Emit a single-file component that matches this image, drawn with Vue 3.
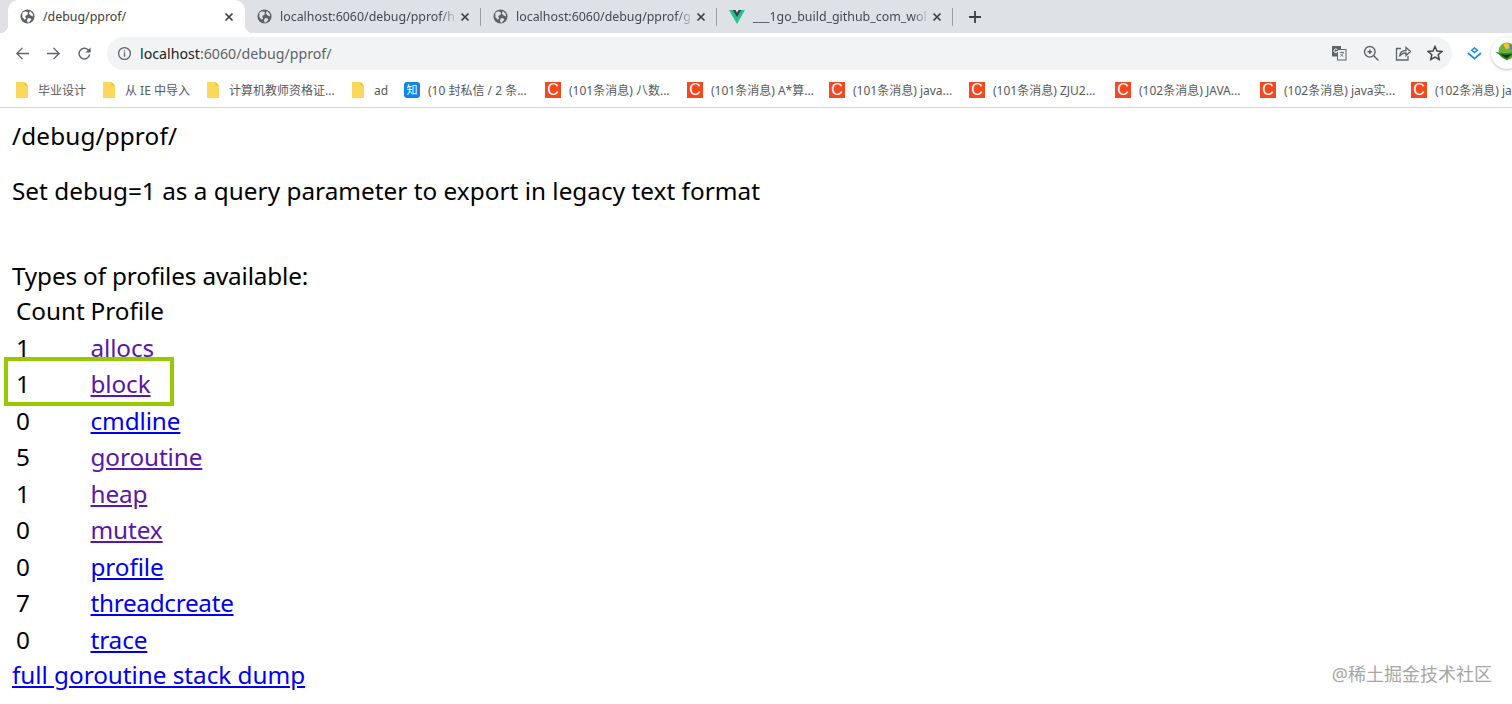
<script setup>
const tabs = [
  { title: 'localhost:6060/debug/pprof/h', icon: 'globe' },
  { title: 'localhost:6060/debug/pprof/g', icon: 'globe' },
  { title: '___1go_build_github_com_wol', icon: 'vue' },
]
const bookmarks = [
  { icon: 'folder', text: '毕业设计', w: 87 },
  { icon: 'folder', text: '从 IE 中导入', w: 104 },
  { icon: 'folder', text: '计算机教师资格证...', w: 145 },
  { icon: 'folder', text: 'ad', w: 52 },
  { icon: 'zhi', text: '(10 封私信 / 2 条...', w: 141 },
  { icon: 'c', text: '(101条消息) 八数...', w: 142 },
  { icon: 'c', text: '(101条消息) A*算...', w: 142 },
  { icon: 'c', text: '(101条消息) java...', w: 140 },
  { icon: 'c', text: '(101条消息) ZJU2...', w: 146 },
  { icon: 'c', text: '(102条消息) JAVA...', w: 145 },
  { icon: 'c', text: '(102条消息) java实...', w: 151 },
  { icon: 'c', text: '(102条消息) ja', w: 100 },
]
const rows = [
  { n: 1, name: 'allocs', seen: true },
  { n: 1, name: 'block', seen: true },
  { n: 0, name: 'cmdline', seen: false },
  { n: 5, name: 'goroutine', seen: true },
  { n: 1, name: 'heap', seen: true },
  { n: 0, name: 'mutex', seen: true },
  { n: 0, name: 'profile', seen: false },
  { n: 7, name: 'threadcreate', seen: false, tight: true },
  { n: 0, name: 'trace', seen: false },
]
</script>

<template>
  <div class="page">
    <header class="chrome">
      <div class="tabstrip">
        <div class="tab active">
          <svg class="favicon" viewBox="0 0 16 16"><circle cx="8" cy="8" r="7.500" fill="#5f6368"/><path d="M2.500 4l3-1.500 3 1-.5 2.500-2.500 1.500L6.500 10 5 11.500 2.500 8.500zM10.500 2l3 3 .5 3-2.500-1-2-2zM8.500 9.500l3 .5.5 1.500-2.500 3H8l-.5-2.500z" fill="#fff"/></svg>
          <span class="tabtitle">/debug/pprof/</span>
          <svg class="close" viewBox="0 0 10 10"><path d="M1.500 1.500l7 7M8.500 1.500l-7 7" stroke="#3c4043" stroke-width="1.700"/></svg>
        </div>
        <div v-for="t in tabs" :key="t.title" class="tab">
          <svg v-if="t.icon === 'globe'" class="favicon" viewBox="0 0 16 16"><circle cx="8" cy="8" r="7.500" fill="#5f6368"/><path d="M2.500 4l3-1.500 3 1-.5 2.500-2.500 1.500L6.500 10 5 11.500 2.500 8.500zM10.500 2l3 3 .5 3-2.500-1-2-2zM8.500 9.500l3 .5.5 1.500-2.500 3H8l-.5-2.500z" fill="#dee1e6"/></svg>
          <svg v-else class="favicon vue" viewBox="0 0 16 14"><path d="M0 0h3.500L8 7.500 12.500 0H16L8 14z" fill="#25c28a"/><path d="M3.500 0h3L8 2.700 9.500 0h3L8 7.500z" fill="#2f4858"/></svg>
          <span class="tabtitle">{{ t.title }}</span>
          <svg class="close" viewBox="0 0 10 10"><path d="M1.500 1.500l7 7M8.500 1.500l-7 7" stroke="#3c4043" stroke-width="1.700"/></svg>
        </div>
        <svg class="plus" viewBox="0 0 12 12"><path d="M6 0v12M0 6h12" stroke="#3c4043" stroke-width="1.800"/></svg>
      </div>
      <div class="toolbar">
        <svg class="navicon" viewBox="0 0 16 16"><path d="M15 8H2M8 2L2 8l6 6" fill="none" stroke="#5f6368" stroke-width="1.500"/></svg>
        <svg class="navicon" viewBox="0 0 16 16"><path d="M1 8h13M8 2l6 6-6 6" fill="none" stroke="#5f6368" stroke-width="1.500"/></svg>
        <svg class="navicon reload" viewBox="0 0 16 16"><path d="M13.500 9a5.700 5.700 0 1 1-1.700-5L14 6" fill="none" stroke="#5f6368" stroke-width="1.500"/><path d="M14.500 1.500v5.500H9z" fill="#5f6368"/></svg>
        <div class="omnibox">
          <svg class="info" viewBox="0 0 16 16"><circle cx="8" cy="8" r="6.300" fill="none" stroke="#5f6368" stroke-width="1.400"/><path d="M8 7v4.500M8 4.500v1.400" stroke="#5f6368" stroke-width="1.400"/></svg>
          <span class="url"><span class="host">localhost</span>:6060/debug/pprof/</span>
          <span class="spacer"></span>
          <svg class="omniicon" viewBox="0 0 16 16"><rect x="1" y="1" width="9" height="10.500" fill="#5f6368"/><rect x="6.500" y="4.500" width="8.500" height="10.500" fill="#f1f3f4" stroke="#5f6368"/><path d="M8.500 7.500h4.500M10.700 6.500v1M12.300 7.500c-.5 2-1.500 3-3 4M9.500 9c.7 1 1.500 1.800 2.800 2.500" fill="none" stroke="#5f6368" stroke-width=".8"/><path d="M6.200 4.500a1.900 1.900 0 1 0 .3 2.200H4.700" fill="none" stroke="#fff"/></svg>
          <svg class="omniicon" viewBox="0 0 16 16"><circle cx="6.800" cy="6.800" r="5.300" fill="none" stroke="#5f6368" stroke-width="1.400"/><path d="M10.700 10.700L15.500 15.500M4.500 6.800h4.600M6.800 4.500v4.600" stroke="#5f6368" stroke-width="1.400"/></svg>
          <svg class="omniicon" viewBox="0 0 16 16"><path d="M6 3.500H1.500V15H13v-4" fill="none" stroke="#5f6368" stroke-width="1.300"/><path d="M4.500 11.500c.3-4 3-6 6.500-6V2.500L15.500 6.500 11 10.500V8c-3 0-5 1-6.500 3.500z" fill="none" stroke="#5f6368" stroke-width="1.300"/></svg>
          <svg class="omniicon" viewBox="0 0 16 16"><path d="M8 1.500l2 4.500 4.800.5-3.600 3.200 1 4.800L8 12.100l-4.200 2.400 1-4.800L1.200 6.500 6 6z" fill="none" stroke="#444" stroke-width="1.500"/></svg>
        </div>
        <svg class="idm" viewBox="0 0 16 14"><path d="M5 3.500L8 1l3 2.500L8 6z" fill="none" stroke="#1a8cf0" stroke-width="1.700"/><path d="M1 6.500l7 6 7-6" fill="none" stroke="#1a8cf0" stroke-width="2"/></svg>
        <div class="avatar">
          <svg viewBox="0 0 24 24" width="24" height="24"><circle cx="13" cy="10" r="8.500" fill="#6fb13f"/><path d="M9 2.500c4-1 7 0 9 3l-6 3z" fill="#f2c230"/><path d="M15 3c3 1 5 3 6 6l-5-1z" fill="#3b82d6"/><path d="M1 10.500c6 2 14 2 21 0l-9 9z" fill="#2e8b2e"/><path d="M6 13c4 1 8 1 12 0l-5.500 4.500z" fill="#143d14"/></svg>
        </div>
      </div>
      <div class="bookmarks">
        <div v-for="b in bookmarks" :key="b.text" class="bookmark" :style="{ width: b.w + 'px' }">
          <svg v-if="b.icon === 'folder'" class="bicon folder" viewBox="0 0 12 16"><path d="M0 0h8.500L12 3.500V16H0z" fill="#fbd75b"/><path d="M8.500 0L12 3.500H8.500z" fill="#f2c230"/></svg>
          <span v-else-if="b.icon === 'zhi'" class="bicon zhi">知</span>
          <span v-else class="bicon csdn">C</span>
          <span class="btext">{{ b.text }}</span>
        </div>
      </div>
    </header>

    <main class="content">
      <div class="title">/debug/pprof/</div>
      <p class="note">Set debug=1 as a query parameter to export in legacy text format</p>
      <div class="types">Types of profiles available:</div>
      <div class="profiles">
        <div>Count</div>
        <div>Profile</div>
        <template v-for="r in rows" :key="r.name">
          <div>{{ r.n }}</div>
          <div><a href="#" :class="{ visited: r.seen, tight: r.tight }">{{ r.name }}</a></div>
        </template>
      </div>
      <a href="#" class="dump">full goroutine stack dump</a>
    </main>

    <div class="highlight"></div>
    <div class="watermark">@稀土掘金技术社区</div>
  </div>
</template>

<style scoped>
.page {
  position: relative;
  width: 1512px;
  height: 704px;
  overflow: hidden;
  background: #fff;
  font-family: "Noto Sans", "Noto Sans CJK SC", sans-serif;
  color: #000;
}
.chrome {
  height: 108px;
  border-bottom: 1px solid #d6d7d9;
  box-sizing: border-box;
}
.tabstrip {
  height: 33px;
  background: #dee1e6;
  display: flex;
  align-items: center;
  padding-left: 8px;
}
.tab {
  width: 236px;
  height: 33px;
  box-sizing: border-box;
  display: flex;
  align-items: center;
  padding: 0 11px 0 12px;
  position: relative;
  color: #45494f;
  font-size: 12.400px;
}
.tab::after {
  content: "";
  position: absolute;
  right: 0;
  top: 8px;
  height: 18px;
  width: 1px;
  background: #9da0a5;
}
.tab.active {
  width: 237px;
  background: #fff;
  border-radius: 10px 10px 0 0;
  color: #3c4043;
}
.tab.active::before,
.tab.active::after {
  content: "";
  position: absolute;
  top: auto;
  bottom: 0;
  width: 8px;
  height: 8px;
  background: #fff;
}
.tab.active::before {
  left: -8px;
  -webkit-mask-image: radial-gradient(circle at 0 0, transparent 8px, #000 8.500px);
  mask-image: radial-gradient(circle at 0 0, transparent 8px, #000 8.500px);
}
.tab.active::after {
  right: -8px;
  -webkit-mask-image: radial-gradient(circle at 100% 0, transparent 8px, #000 8.500px);
  mask-image: radial-gradient(circle at 100% 0, transparent 8px, #000 8.500px);
}
.favicon {
  width: 15px;
  height: 15px;
  flex: none;
}
.favicon.vue {
  width: 16px;
  height: 14px;
}
.tabtitle {
  flex: 1;
  min-width: 0;
  margin-left: 8px;
  white-space: nowrap;
  overflow: hidden;
  -webkit-mask-image: linear-gradient(to right, #000 90%, transparent 100%);
  mask-image: linear-gradient(to right, #000 90%, transparent 100%);
}
.tab.active .tabtitle {
  -webkit-mask-image: none;
  mask-image: none;
}
.close {
  flex: none;
  width: 10px;
  height: 10px;
  margin-left: 2px;
}
.plus {
  margin-left: 16px;
  width: 12px;
  height: 12px;
  flex: none;
}
.toolbar {
  height: 40px;
  display: flex;
  align-items: center;
  padding-left: 15px;
}
.navicon {
  width: 15px;
  height: 15px;
  margin-right: 16px;
  flex: none;
}
.navicon.reload {
  margin-right: 0;
}
.omnibox {
  margin-left: 15px;
  width: 1345px;
  height: 33px;
  border-radius: 17px;
  background: #f1f3f4;
  display: flex;
  align-items: center;
  padding: 0 9px 0 10px;
  box-sizing: border-box;
  flex: none;
}
.info {
  width: 15px;
  height: 15px;
  flex: none;
}
.url {
  margin-left: 8px;
  font-size: 14.200px;
  color: #5f6368;
}
.host {
  color: #202124;
}
.spacer {
  flex: 1;
}
.omniicon {
  width: 16px;
  height: 16px;
  margin-left: 16px;
  flex: none;
}
.idm {
  width: 15px;
  height: 13px;
  margin-left: 15px;
  flex: none;
}
.avatar {
  margin-left: 9px;
  width: 32px;
  height: 32px;
  border-radius: 50%;
  background: #fff;
  box-shadow: 0 1px 3px rgba(0, 0, 0, .25);
  display: flex;
  align-items: center;
  padding-left: 3px;
  box-sizing: border-box;
  flex: none;
}
.bookmarks {
  height: 34px;
  display: flex;
  align-items: center;
  padding-left: 16px;
  overflow: hidden;
}
.bookmark {
  flex: none;
  display: flex;
  align-items: center;
  font-size: 12px;
  color: #55595e;
  white-space: nowrap;
}
.bicon {
  flex: none;
  width: 16px;
  height: 16px;
}
.bicon.folder {
  width: 12px;
}
.folder + .btext {
  margin-left: 10px;
}
.zhi {
  background: #0e84ec;
  color: #fff;
  border-radius: 3px;
  font-size: 11px;
  line-height: 16px;
  text-align: center;
}
.csdn {
  background: #f4481e;
  color: #fff;
  font-family: "Liberation Sans", sans-serif;
  font-size: 16px;
  line-height: 16px;
  text-align: center;
}
.btext {
  margin-left: 8px;
}
.content {
  padding: 11px 12px 0;
  font-size: 24.300px;
  line-height: 33px;
}
.title {
  height: 33px;
  letter-spacing: .15px;
}
.note {
  margin: 22px 0 0;
  height: 33px;
  letter-spacing: .03px;
}
.types {
  margin-top: 52px;
  height: 33px;
  letter-spacing: -.15px;
}
.profiles {
  display: grid;
  grid-template-columns: 74.500px auto;
  grid-auto-rows: 36.500px;
  justify-content: start;
  padding: 2px 0 0 4px;
}
a {
  color: #0000ee;
  text-decoration: underline;
  letter-spacing: -.1px;
}
a.visited {
  color: #5a16a8;
}
a.tight {
  letter-spacing: -.3px;
}
.dump {
  display: block;
  margin-top: -1px;
  letter-spacing: -.03px;
}
.highlight {
  position: absolute;
  left: 4px;
  top: 357px;
  width: 170px;
  height: 49px;
  box-sizing: border-box;
  border: 4px solid #97c900;
}
.watermark {
  position: absolute;
  right: 20px;
  top: 661px;
  font-size: 18px;
  line-height: 26px;
  color: #a6a6a6;
}
</style>
<style>
body { margin: 0; }
</style>
